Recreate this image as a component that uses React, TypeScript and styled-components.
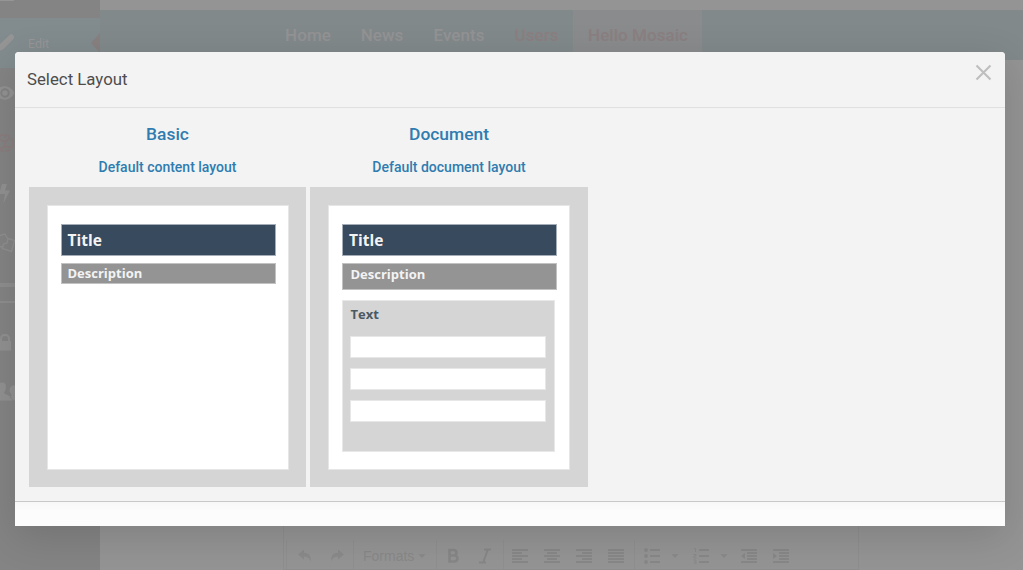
import React from "react";
import styled, { createGlobalStyle } from "styled-components";

const GlobalStyle = createGlobalStyle`
  * { box-sizing: border-box; }
  html, body { margin: 0; overflow: hidden; }
  body { background: #949494; font-family: Roboto, "Liberation Sans", sans-serif; }
`;

const Page = styled.div`
  display: flex;
  width: 100vw;
  height: 100vh;
  overflow: hidden;
`;

const Sidebar = styled.aside`
  flex: 0 0 100px;
  display: flex;
  flex-direction: column;
  background: #848484;
  overflow: hidden;
`;

const SidebarTop = styled.div`
  height: 18px;
  flex: none;
  svg { display: block; }
`;

const SideItem = styled.div<{ $active?: boolean; $accent?: boolean }>`
  height: 50px;
  flex: none;
  display: flex;
  align-items: center;
  justify-content: space-between;
  background: ${(p) => (p.$active ? "#828b8e" : "transparent")};
  color: ${(p) => (p.$accent ? "#8b7d7e" : "#969696")};
  font-size: 12.5px;
`;

const SideIcon = styled.svg`
  display: block;
  flex: none;
  width: 28px;
  height: 28px;
`;

const SideLabel = styled.span`
  flex: 1;
`;

const Rule = styled.div<{ $h: number; $top: number; $gap: number }>`
  flex: none;
  height: ${(p) => p.$h}px;
  margin-top: ${(p) => p.$top}px;
  margin-bottom: ${(p) => p.$gap}px;
  background: #8e8e8e;
`;

const Main = styled.main`
  flex: 1;
  display: flex;
  flex-direction: column;
  justify-content: space-between;
`;

const NavBar = styled.nav`
  height: 50px;
  margin-top: 10px;
  padding-left: 170px;
  display: flex;
  background: #82898b;
`;

const NavItem = styled.a<{ $tone?: "accent"; $current?: boolean; $w: number }>`
  display: flex;
  justify-content: center;
  width: ${(p) => p.$w}px;
  padding-left: 1px;
  line-height: 50px;
  font-size: 17px;
  font-weight: 500;
  letter-spacing: 0.05px;
  white-space: nowrap;
  color: ${(p) => (p.$tone ? "#8b7f81" : "#939394")};
  background: ${(p) => (p.$current ? "#898b8c" : "transparent")};
`;

const Editor = styled.section`
  width: 576px;
  height: 60px;
  margin-left: 183px;
  padding-top: 30px;
  border: 1px solid #8e8e8e;
  border-width: 0 1px 1px;
`;

const Toolbar = styled.div`
  display: flex;
  height: 29px;
  padding-left: 2px;
`;

const ToolGroup = styled.div<{ $w: number; $pad: number; $gap?: number }>`
  display: flex;
  align-items: center;
  width: ${(p) => p.$w}px;
  padding-left: ${(p) => p.$pad}px;
  padding-top: 3px;
  gap: ${(p) => p.$gap ?? 16}px;
  border-left: 1px solid #8f8f8f;
  color: #888888;
  font: 14px "Liberation Sans", Arial, sans-serif;
`;

const ToolGap = styled.span<{ $w: number }>`
  flex: 0 0 ${(p) => p.$w}px;
`;

const ToolIcon = styled.svg<{ $w?: number }>`
  display: block;
  flex: none;
  width: ${(p) => p.$w ?? 16}px;
  height: 16px;
`;

const Overlay = styled.div`
  position: fixed;
  inset: 0;
  padding: 52px 18px 44px 15px;
`;

const Modal = styled.section`
  display: flex;
  flex-direction: column;
  width: 990px;
  height: 474px;
  border-radius: 4px 4px 0 0;
  background: #fcfcfc;
  box-shadow: 0 10px 40px rgba(0, 0, 0, 0.14);
`;

const ModalHeader = styled.header`
  display: flex;
  justify-content: space-between;
  height: 56px;
  padding: 0 13px 0 12px;
  border-bottom: 1px solid #e0e0e0;
  border-radius: 4px 4px 0 0;
  background: #f3f3f3;
`;

const ModalTitle = styled.h2`
  margin: 0;
  font-size: 16.8px;
  font-weight: 400;
  line-height: 54px;
  color: #4d4d4d;
`;

const Close = styled.button`
  display: block;
  width: 17px;
  height: 17px;
  margin: 12px 0 0;
  padding: 0;
  border: 0;
  background: none;
  svg { display: block; }
`;

const ModalBody = styled.div`
  display: flex;
  gap: 4px;
  height: 394px;
  padding: 14px 14px 0;
  border-bottom: 1px solid #c9c9c9;
  background: #f3f3f3;
`;

const ModalFooter = styled.footer`
  flex: 1;
  background: linear-gradient(#f7f7f7, #fcfcfc 40%);
`;

const Choice = styled.a<{ $w: number }>`
  width: ${(p) => p.$w}px;
  text-align: center;
  color: #2e7cb0;
`;

const ChoiceName = styled.h3`
  margin: 0;
  font-size: 17.4px;
  font-weight: 500;
  line-height: 24px;
`;

const ChoiceText = styled.p`
  margin: 0;
  height: 41px;
  font-size: 14px;
  font-weight: 500;
  line-height: 42px;
`;

const Preview = styled.div`
  height: 300px;
  padding: 18px;
  background: #d5d5d5;
  text-align: left;
  font-family: "Open Sans", sans-serif;
  font-weight: 700;
`;

const Sheet = styled.div<{ $inset: number }>`
  width: 242px;
  height: 265px;
  padding: 18px ${(p) => p.$inset}px;
  border: 1px solid #e6e6e6;
  background: #fff;
`;

const TitleBlock = styled.div`
  height: 32px;
  width: 215px;
  padding-left: 6px;
  border: 1px solid #a5adb8;
  background: #384a5e;
  color: #f3f3f3;
  font-size: 15.5px;
  line-height: 30px;
`;

const DescriptionBlock = styled.div<{ $h: number; $pad: number; $lh: number }>`
  height: ${(p) => p.$h}px;
  width: 215px;
  margin-top: 7px;
  padding-left: ${(p) => p.$pad}px;
  border: 1px solid #c2c2c2;
  background: #949494;
  color: #f3f3f3;
  font-size: 13px;
  line-height: ${(p) => p.$lh}px;
`;

const TextBlock = styled.div`
  display: flex;
  flex-direction: column;
  gap: 10px;
  width: 213px;
  height: 152px;
  margin-top: 10px;
  padding: 0 8px 0 7px;
  border: 1px solid #e8e8e8;
  background: #d5d5d5;
  color: #4a5964;
  font-size: 13px;
`;

const TextLabel = styled.span`
  height: 25px;
  padding-left: 0.5px;
  line-height: 27px;
`;

const TextLine = styled.div`
  flex: none;
  width: 196px;
  height: 22px;
  border: 1px solid #e7e7e7;
  background: #fff;
`;

const Undo = () => (
  <ToolIcon viewBox="0 0 16 16">
    <path d="M1 6.500 7 1.500v3.200c5 .2 7.500 3 6.500 9C12.500 9.500 10.500 8.800 7 8.800v2.700z" fill="#8a8a8a" />
  </ToolIcon>
);

const Redo = () => (
  <ToolIcon viewBox="0 0 16 16">
    <path d="M15 6.500 9 1.500v3.200C4 4.900 1.500 7.700 2.500 13.700 3.500 9.500 5.500 8.800 9 8.800v2.700z" fill="#8a8a8a" />
  </ToolIcon>
);

const Caret = () => (
  <ToolIcon $w={8} viewBox="0 0 8 16">
    <path d="M.5 6.300h7L4 10z" fill="#898989" />
  </ToolIcon>
);

const alignRows: Record<string, [number, number][]> = {
  left: [[0, 16], [0, 10], [0, 16], [0, 10], [0, 16]],
  center: [[0, 16], [3, 10], [0, 16], [3, 10], [0, 16]],
  right: [[0, 16], [6, 10], [0, 16], [6, 10], [0, 16]],
  full: [[0, 16], [0, 16], [0, 16], [0, 16], [0, 16]],
  indent: [[0, 16], [6, 10], [6, 10], [6, 10], [0, 16]],
};

const Lines = ({ rows, arrow }: { rows: string; arrow?: string }) => (
  <ToolIcon viewBox="0 0 16 16">
    {alignRows[rows].map(([x, w], i) => (
      <rect key={i} x={x} y={1 + i * 3} width={w} height={2} rx={0.6} fill="#878787" />
    ))}
    {arrow && <path d={arrow} fill="#878787" />}
  </ToolIcon>
);

const List = ({ numbered }: { numbered?: boolean }) => (
  <ToolIcon viewBox="0 0 16 16">
    {[2, 8, 14].map((y, i) => (
      <g key={y} fill="#878787">
        <rect x={6} y={y - 1} width={10} height={2} rx={0.6} />
        {numbered ? (
          <path
            d={i === 0 ? "M1 .5h1.500V4" : i === 1 ? "M.5 6.500h2.500v1.500H1v2h2.500" : "M.5 12h2.500v4H.5M1 14h2"}
            fill="none"
            stroke="#898989"
          />
        ) : (
          <circle cx={2} cy={y} r={1.9} />
        )}
      </g>
    ))}
  </ToolIcon>
);

export default function App() {
  return (
    <>
      <GlobalStyle />
      <Page>
        <Sidebar>
          <SidebarTop>
            <svg width="14" height="2"><path d="M0 .5h14" stroke="#959595" /></svg>
          </SidebarTop>
          <SideItem $active>
            <SideIcon viewBox="0 0 28 28">
              <path d="M-1 16 9.500 6Q11.500 4 13.500 6.500q1.500 2-.5 4L3 20.500-3 23z" fill="#959595" />
            </SideIcon>
            <SideLabel>Edit</SideLabel>
            <svg width="9" height="20"><path d="M9 0v20L0 10z" fill="#888180" /></svg>
          </SideItem>
          <SideItem>
            <SideIcon viewBox="0 0 28 28">
              <path d="M-5 14C-1 5 10 5 14.500 14 10 23-1 23-5 14z" fill="#929292" />
              <circle cx="5" cy="14" r="3.700" fill="none" stroke="#828282" strokeWidth="1.900" />
            </SideIcon>
          </SideItem>
          <SideItem $accent>
            <SideIcon viewBox="0 0 28 28">
              <g fill="none" stroke="currentColor" strokeWidth="1.800">
                <circle cx="4.500" cy="14" r="8.300" strokeDasharray="5 1.700" />
                <path d="M-1 10l6 3 5-4M5 13l-1 5-5 2M4 18l7 0M5 6v3" />
              </g>
            </SideIcon>
          </SideItem>
          <SideItem>
            <SideIcon viewBox="0 0 28 28">
              <path d="M2 5h5L5 11.500h5L3.300 24.500 5 15H0v-3z" fill="#919191" />
            </SideIcon>
          </SideItem>
          <SideItem>
            <SideIcon viewBox="0 0 28 28">
              <path d="M-2 7 5 5l3.500 6M-2 17l4 1M8 9.500l6.500 2-3 11-9-3 1-4.500 3.500-1z" fill="none" stroke="#8f8f8f" strokeWidth="1.400" />
            </SideIcon>
          </SideItem>
          <Rule $h={4} $top={15} $gap={14} />
          <Rule $h={2} $top={0} $gap={14} />
          <SideItem>
            <SideIcon viewBox="0 0 28 28">
              <rect x="-1" y="13" width="12" height="9.500" fill="#919191" />
              <path d="M1 14v-3q0-4 4-4t4 4v3" fill="none" stroke="#919191" strokeWidth="2" />
            </SideIcon>
          </SideItem>
          <SideItem>
            <SideIcon viewBox="0 0 28 28">
              <path d="M-1 5Q6 3 6 9q0 4-2 5.500c0 2.500 8 2 8.500 8H-1zM17 7q-8 0-7.500 6l2 4q0 2-2 2.500l5 3h3z" fill="#919191" />
            </SideIcon>
          </SideItem>
        </Sidebar>
        <Main>
          <NavBar>
            <NavItem $w={75}>Home</NavItem>
            <NavItem $w={73}>News</NavItem>
            <NavItem $w={81}>Events</NavItem>
            <NavItem $w={74} $tone="accent">Users</NavItem>
            <NavItem $w={129} $tone="accent" $current>Hello Mosaic</NavItem>
          </NavBar>
          <Editor>
            <Toolbar>
              <ToolGroup $w={67} $pad={10}><Undo /><Redo /></ToolGroup>
              <ToolGroup $w={83} $pad={9} $gap={4}>Formats<Caret /></ToolGroup>
              <ToolGroup $w={67} $pad={8}>
                <ToolIcon viewBox="0 0 16 16">
                  <path d="M4.500 2h4c4 0 4 5.500 0 5.500h-4V2zM4.500 7.500h5c4 0 4 6-.5 6h-4.500z" fill="none" stroke="#868686" strokeWidth="2.600" />
                </ToolIcon>
                <ToolIcon viewBox="0 0 16 16">
                  <path d="M7 1.500h7M2 14.500h7M11 1 6 15" fill="none" stroke="#868686" strokeWidth="1.900" />
                </ToolIcon>
              </ToolGroup>
              <ToolGroup $w={131} $pad={8}>
                <Lines rows="left" /><Lines rows="center" /><Lines rows="right" /><Lines rows="full" />
              </ToolGroup>
              <ToolGroup $w={220} $pad={9} $gap={0}>
                <List /><ToolGap $w={11} /><Caret /><ToolGap $w={14} />
                <List numbered /><ToolGap $w={11} /><Caret /><ToolGap $w={13} />
                <Lines rows="indent" arrow="M0 8l4-3v6z" /><ToolGap $w={16} />
                <Lines rows="indent" arrow="M4 8 0 5v6z" />
              </ToolGroup>
            </Toolbar>
          </Editor>
        </Main>
      </Page>
      <Overlay>
        <Modal>
          <ModalHeader>
            <ModalTitle>Select Layout</ModalTitle>
            <Close aria-label="Close">
              <svg width="17" height="17" viewBox="0 0 17 17">
                <path d="M1.500 1.500l14 14M15.500 1.500l-14 14" stroke="#bebebe" strokeWidth="2.100" />
              </svg>
            </Close>
          </ModalHeader>
          <ModalBody>
            <Choice $w={277}>
              <ChoiceName>Basic</ChoiceName>
              <ChoiceText>Default content layout</ChoiceText>
              <Preview>
                <Sheet $inset={12.5}>
                  <TitleBlock>Title</TitleBlock>
                  <DescriptionBlock $h={21} $pad={6} $lh={18}>Description</DescriptionBlock>
                </Sheet>
              </Preview>
            </Choice>
            <Choice $w={278}>
              <ChoiceName>Document</ChoiceName>
              <ChoiceText>Default document layout</ChoiceText>
              <Preview>
                <Sheet $inset={13}>
                  <TitleBlock>Title</TitleBlock>
                  <DescriptionBlock $h={27} $pad={7.5} $lh={21}>Description</DescriptionBlock>
                  <TextBlock>
                    <TextLabel>Text</TextLabel>
                    <TextLine />
                    <TextLine />
                    <TextLine />
                  </TextBlock>
                </Sheet>
              </Preview>
            </Choice>
          </ModalBody>
          <ModalFooter />
        </Modal>
      </Overlay>
    </>
  );
}
